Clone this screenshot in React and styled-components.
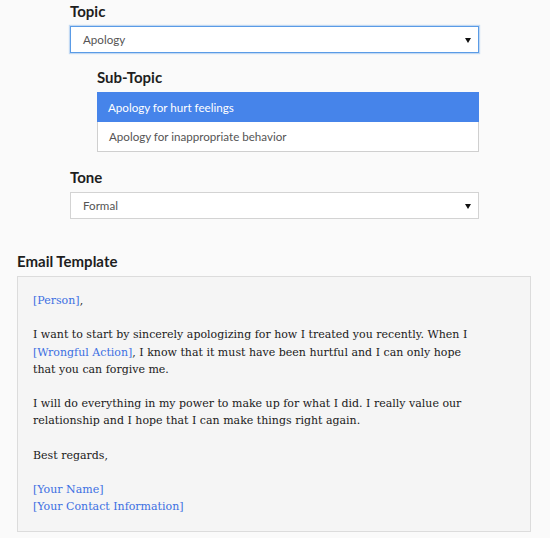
import React from 'react';
import styled, { createGlobalStyle } from 'styled-components';

const GlobalStyle = createGlobalStyle`
	html, body {
		margin: 0;
		padding: 0;
		background: #fafafa;
	}
	* {
		box-sizing: border-box;
	}
`;

const Page = styled.div`
	width: 550px;
	min-height: 538px;
	padding: 2px 19px 0 17px;
	background: #fafafa;
	font-family: 'Lato', 'Open Sans', sans-serif;
	color: #222;
`;

const Form = styled.div`
	margin-left: 53px;
	width: 409px;
`;

const Group = styled.div`
	margin-top: ${(p) => p.top || 0}px;
	margin-left: ${(p) => p.indent || 0}px;
`;

const Label = styled.div`
	font-size: 15px;
	line-height: 18px;
	font-weight: 700;
	color: #1e1e1e;
	margin-bottom: 6px;
`;

const SelectBox = styled.div`
	position: relative;
	height: 27px;
	display: flex;
	align-items: center;
	padding: 0 12px;
	background: #fff;
	border: 1px solid ${(p) => (p.focused ? '#5a9be6' : '#d3d3d3')};
	box-shadow: ${(p) => (p.focused ? '0 0 1px 1px rgba(90, 155, 230, 0.35)' : 'none')};
	font-size: 11.6px;
	color: #555;

	&::after {
		content: '';
		position: absolute;
		right: 7px;
		top: 11px;
		border-left: 3px solid transparent;
		border-right: 3px solid transparent;
		border-top: 5px solid #111;
	}
`;

const ListBox = styled.div`
	border: 1px solid #cfcfcf;
	background: #fff;
`;

const Option = styled.div`
	display: flex;
	align-items: center;
	padding: 0 11px;
	font-size: 11.6px;
	color: ${(p) => (p.selected ? '#fff' : '#555')};
	background: ${(p) => (p.selected ? '#4684ea' : '#fff')};
	margin: ${(p) => (p.selected ? '-1px -1px 0' : '0')};
	height: ${(p) => (p.selected ? '30px' : '29px')};
`;

const TemplateLabel = styled(Label)`
	margin-top: 33px;
`;

const TemplateBox = styled.div`
	width: 514px;
	border: 1px solid #dcdcdc;
	background: #f5f5f5;
	padding: 15px 52px 15px 15px;
	font-family: 'DejaVu Serif', 'Liberation Serif', serif;
	font-size: 11px;
	line-height: 17.2px;
	color: #1a1a1a;
`;

const Para = styled.p`
	margin: 0 0 ${(p) => (p.last ? 0 : 17.2)}px;
`;

const Placeholder = styled.span`
	color: #3c6fe2;
`;

export default function App() {
	return (
		<Page>
			<GlobalStyle />
			<Form>
				<Group>
					<Label>Topic</Label>
					<SelectBox focused>Apology</SelectBox>
				</Group>
				<Group top={15} indent={27}>
					<Label>Sub-Topic</Label>
					<ListBox>
						<Option selected>Apology for hurt feelings</Option>
						<Option>Apology for inappropriate behavior</Option>
					</ListBox>
				</Group>
				<Group top={16}>
					<Label>Tone</Label>
					<SelectBox>Formal</SelectBox>
				</Group>
			</Form>
			<TemplateLabel>Email Template</TemplateLabel>
			<TemplateBox>
				<Para>
					<Placeholder>[Person]</Placeholder>,
				</Para>
				<Para>
					I want to start by sincerely apologizing for how I treated you recently. When I{' '}
					<Placeholder>[Wrongful Action]</Placeholder>, I know that it must have been hurtful and I can
					only hope that you can forgive me.
				</Para>
				<Para>
					I will do everything in my power to make up for what I did. I really value our relationship
					and I hope that I can make things right again.
				</Para>
				<Para>Best regards,</Para>
				<Para last>
					<Placeholder>[Your Name]</Placeholder>
					<br />
					<Placeholder>[Your Contact Information]</Placeholder>
				</Para>
			</TemplateBox>
		</Page>
	);
}
